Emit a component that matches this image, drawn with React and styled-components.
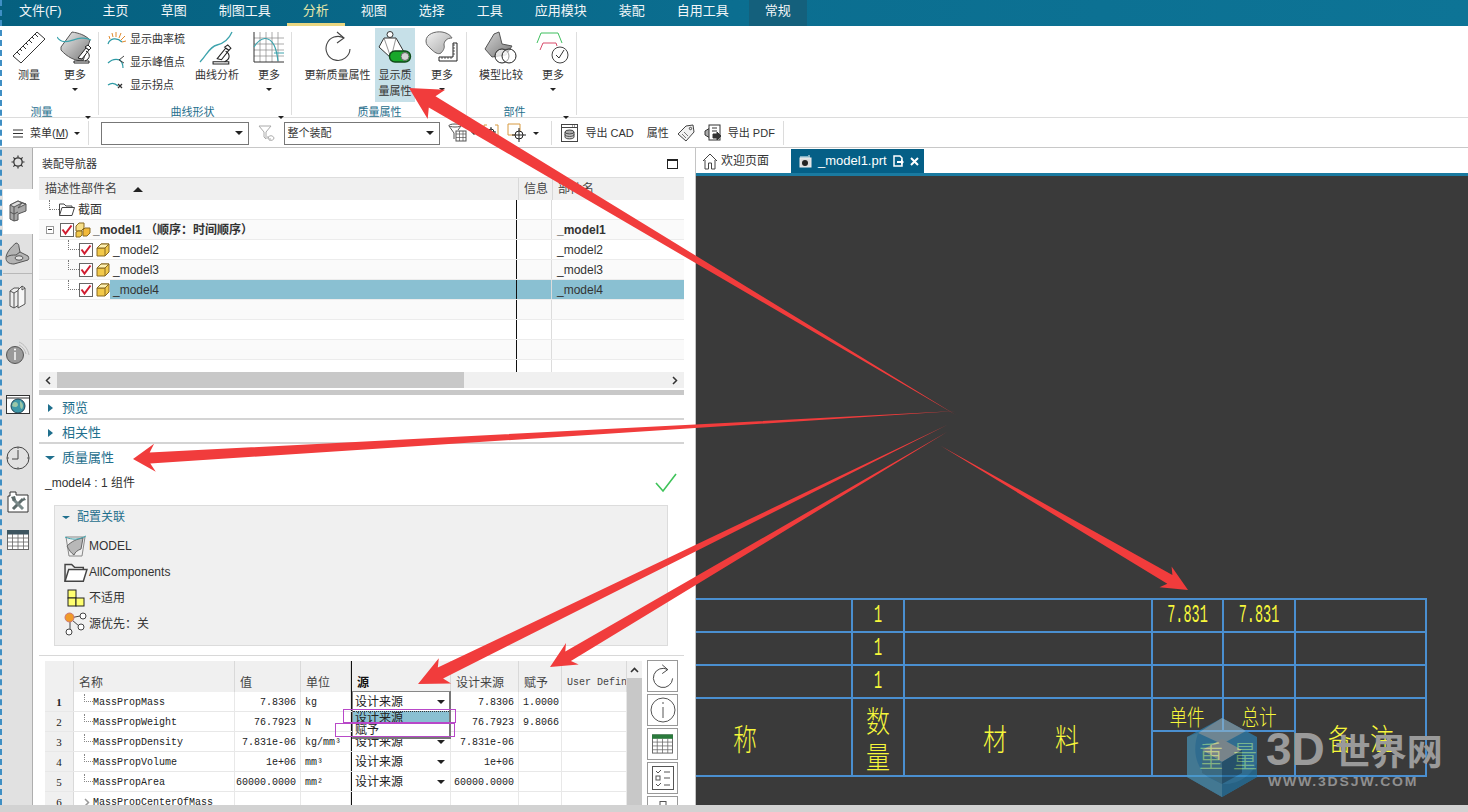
import React from "react";
import styled, { createGlobalStyle } from "styled-components";

const CJK = `"Liberation Sans", "Noto Sans CJK SC", sans-serif`;
const MONO = `"Liberation Mono", "Noto Sans CJK SC", monospace`;

const GlobalStyle = createGlobalStyle`
  html, body { margin: 0; padding: 0; background: #fff; }
  * { box-sizing: border-box; }
`;

const Page = styled.div`
  position: relative;
  width: 1468px;
  height: 812px;
  overflow: hidden;
  display: flex;
  flex-direction: column;
  font-family: ${CJK};
  font-size: 12px;
  line-height: 14px;
  color: #333;
  background: #fff;
  &::before {
    content: "";
    position: absolute;
    left: 0;
    top: 0;
    bottom: 7px;
    border-left: 2px dashed #3f8fc4;
    z-index: 5;
  }
`;

/* menu bar */
const MenuBar = styled.div`
  height: 26px;
  flex: none;
  display: flex;
  align-items: stretch;
  background: linear-gradient(90deg, #05607f 0%, #0b6e90 50%, #0d7496 100%);
  padding-left: 3px;
`;
const MenuTab = styled.div`
  display: flex;
  align-items: center;
  padding: 0 16px 2px;
  font-size: 13px;
  color: ${(p) => (p.$active ? "#e6e6a8" : "#f2f6f8")};
  margin-right: ${(p) => p.$mr || 0}px;
  margin-left: ${(p) => p.$ml || 0}px;
  background: ${(p) => (p.$context ? "#14607c" : "transparent")};
  border-bottom: 3px solid ${(p) => (p.$active ? "#e9d681" : "transparent")};
`;

/* ribbon */
const Ribbon = styled.div`
  height: 92px;
  flex: none;
  display: flex;
  background: #fff;
  border-bottom: 1px solid #dcdcdc;
`;
const Group = styled.div`
  width: ${(p) => p.$w}px;
  height: 91px;
  display: flex;
  flex-direction: column;
  position: relative;
  &::after {
    content: "";
    position: absolute;
    right: 0;
    top: 6px;
    bottom: 2px;
    width: 1px;
    background: #dedede;
  }
`;
const GroupBody = styled.div`
  height: 76px;
  padding-top: 2px;
  padding-left: ${(p) => p.$pl || 0}px;
  display: flex;
`;
const GroupFooter = styled.div`
  flex: 1;
  display: flex;
  align-items: center;
  justify-content: center;
  position: relative;
  font-size: 11px;
  color: #1f6f8d;
  padding-top: 3px;
  padding-right: ${(p) => p.$pr || 0}px;
  span.c {
    position: absolute;
    right: 8px;
    top: 6px;
  }
`;
const RibbonBtn = styled.div`
  width: ${(p) => p.$w}px;
  margin-left: ${(p) => p.$ml || 0}px;
  height: 74px;
  padding-top: 3px;
  display: flex;
  flex-direction: column;
  align-items: center;
  background: ${(p) => (p.$active ? "#c6e0e8" : "transparent")};
  svg { flex: none; }
`;
const BtnIcon = styled.div`
  height: 36px;
  display: flex;
  align-items: flex-start;
  justify-content: center;
`;
const BtnLabel = styled.div`
  font-size: 11px;
  line-height: 16px;
  text-align: center;
  white-space: nowrap;
  color: #333;
`;
const Caret = styled.span`
  display: inline-block;
  width: 0;
  height: 0;
  border-left: ${(p) => p.$s || 3}px solid transparent;
  border-right: ${(p) => p.$s || 3}px solid transparent;
  border-top: ${(p) => p.$s || 3}px solid #222;
`;
const SortUp = styled.i`
  display: inline-block;
  width: 0;
  height: 0;
  border-left: 5px solid transparent;
  border-right: 5px solid transparent;
  border-bottom: 5px solid #222;
`;
const BtnCaret = styled.div`
  height: 12px;
  display: flex;
  align-items: center;
`;
const SmallList = styled.div`
  width: ${(p) => p.$w}px;
  margin-left: 8px;
  margin-top: -1px;
  display: flex;
  flex-direction: column;
`;
const SmallItem = styled.div`
  height: 23px;
  display: flex;
  align-items: center;
  gap: 3px;
  font-size: 11px;
  white-space: nowrap;
`;

/* toolbar */
const Toolbar = styled.div`
  height: 30px;
  flex: none;
  display: flex;
  align-items: center;
  background: #fff;
  border-bottom: 1px solid #c8c8c8;
  padding: 1px 0 0 13px;
  font-size: 11px;
`;
const ToolText = styled.span`
  margin-left: ${(p) => p.$ml || 0}px;
  white-space: nowrap;
`;
const ToolIcon = styled.span`
  display: inline-flex;
  margin-left: ${(p) => p.$ml || 0}px;
`;
const ToolSep = styled.span`
  width: 1px;
  height: 24px;
  background: #dcdcdc;
  margin-left: ${(p) => p.$ml || 0}px;
`;
const SelectBox = styled.div`
  width: ${(p) => p.$w}px;
  height: 23px;
  margin-left: ${(p) => p.$ml}px;
  border: 1px solid #777;
  display: flex;
  align-items: center;
  justify-content: space-between;
  padding: 0 5px 0 3px;
  font-size: 11px;
  background: #fff;
`;

/* main area */
const Main = styled.div`
  flex: 1;
  min-height: 0;
  display: flex;
`;
const Rail = styled.div`
  width: 33px;
  flex: none;
  background: #e1e1e1;
  border-right: 1px solid #aeaeae;
  display: flex;
  flex-direction: column;
  padding-left: 3px;
`;
const RailTab = styled.div`
  height: ${(p) => p.$h}px;
  margin-top: ${(p) => p.$mt || 0}px;
  margin-bottom: ${(p) => p.$mb || 0}px;
  margin-right: ${(p) => (p.$active ? -1 : 0)}px;
  display: flex;
  align-items: center;
  justify-content: center;
  background: ${(p) => (p.$active ? "#fff" : "transparent")};
  border-bottom: 1px solid ${(p) => (p.$line ? "#b8b8b8" : "transparent")};
`;

const LeftPanel = styled.div`
  width: 663px;
  flex: none;
  display: flex;
  flex-direction: column;
  background: #fff;
  border-right: 1px solid #c4c4c4;
  overflow: hidden;
`;
const NavHeader = styled.div`
  height: 29px;
  flex: none;
  display: flex;
  align-items: center;
  justify-content: space-between;
  padding: 3px 17px 0 9px;
  font-size: 11px;
`;
const MaxIcon = styled.span`
  width: 11px;
  height: 10px;
  border: 1px solid #222;
  border-top-width: 2px;
`;
const TreeBox = styled.div`
  margin: 0 11px 0 6px;
  height: 211px;
  flex: none;
  border-top: 1px solid #ddd;
  display: flex;
  flex-direction: column;
`;
const TreeHead = styled.div`
  height: 22px;
  flex: none;
  display: grid;
  grid-template-columns: 479px 34px 1fr;
  background: #f0f0f0;
  font-size: 12px;
  color: #444;
  span { display: flex; align-items: center; padding-left: 6px; gap: 16px; white-space: nowrap; }
  span + span { border-left: 1px solid #d8d8d8; padding-left: 5px; }
`;
const TreeBody = styled.div`
  height: 172px;
  flex: none;
  overflow: hidden;
`;
const TreeRow = styled.div`
  height: 20px;
  display: grid;
  grid-template-columns: 478px 35px 1fr;
  background: ${(p) => (p.$alt ? "#fafafa" : "#fff")};
  border-bottom: 1px solid #ececec;
  font-size: 12px;
`;
const NameCell = styled.div`
  display: flex;
  align-items: center;
  padding-left: ${(p) => p.$pl || 0}px;
  border-right: 1px solid #111;
  white-space: nowrap;
  min-width: 0;
`;
const RowLabel = styled.div`
  flex: 1;
  height: 100%;
  display: flex;
  align-items: center;
  padding-left: ${(p) => (p.$bold ? 1 : 3)}px;
  font-weight: ${(p) => (p.$bold ? 700 : 400)};
  background: ${(p) => (p.$sel ? "#8ac0d2" : "transparent")};
`;
const ColCell = styled.div`
  display: flex;
  align-items: center;
  padding-left: 5px;
  border-right: ${(p) => (p.$info ? "1px solid #dcdcdc" : "0")};
  font-weight: ${(p) => (p.$bold ? 700 : 400)};
  background: ${(p) => (p.$sel ? "#8ac0d2" : "transparent")};
`;
const Connector = styled.span`
  flex: none;
  align-self: flex-start;
  width: ${(p) => p.$w}px;
  height: 10px;
  border-left: 1px dotted #777;
  border-bottom: 1px dotted #777;
`;
const ExpandBox = styled.span`
  flex: none;
  width: 8px;
  height: 8px;
  border: 1px solid #999;
  margin: 0 6px;
  position: relative;
  background: #fff;
  &::after {
    content: "";
    position: absolute;
    left: 1px;
    right: 1px;
    top: 2px;
    height: 1px;
    background: #333;
  }
`;
const IconGap = styled.span`
  width: ${(p) => p.$w}px;
  flex: none;
`;
const HScroll = styled.div`
  height: 16px;
  flex: none;
  display: flex;
  align-items: stretch;
  background: #f0f0f0;
  font-size: 11px;
`;
const ScrollArrow = styled.span`
  width: 18px;
  display: flex;
  align-items: center;
  justify-content: center;
  &:last-child { margin-left: auto; }
`;
const HThumb = styled.span`
  width: 407px;
  background: #c8c8c8;
`;
const Sash = styled.div`
  margin: ${(p) => p.$mt || 0}px 11px 0 6px;
  height: ${(p) => p.$h}px;
  flex: none;
  background: ${(p) => p.$c || "#d4d4d4"};
`;
const SectionHead = styled.div`
  height: ${(p) => p.$h}px;
  flex: none;
  display: flex;
  align-items: center;
  padding-left: ${(p) => p.$pl || 15}px;
  padding-top: ${(p) => p.$pt || 0}px;
  gap: ${(p) => p.$gap || 9}px;
  font-size: 13px;
  color: #1f6f8d;
`;
const TriRight = styled.span`
  width: 0;
  height: 0;
  border-top: 4px solid transparent;
  border-bottom: 4px solid transparent;
  border-left: 5px solid #1f6f8d;
`;
const TriDown = styled.span`
  width: 0;
  height: 0;
  border-left: ${(p) => p.$s || 5}px solid transparent;
  border-right: ${(p) => p.$s || 5}px solid transparent;
  border-top: ${(p) => (p.$s || 5) - 1}px solid #1f6f8d;
`;
const CompLine = styled.div`
  height: 24px;
  flex: none;
  display: flex;
  align-items: center;
  justify-content: space-between;
  padding: 1px 18px 0 12px;
  font-size: 12px;
  color: #333;
`;
const ConfigPanel = styled.div`
  margin: 11px 27px 0 21px;
  height: 141px;
  flex: none;
  background: #f0f0f0;
  border: 1px solid #dcdcdc;
  padding-left: 7px;
`;
const ConfigHead = styled.div`
  height: 22px;
  margin-bottom: 5px;
  display: flex;
  align-items: center;
  gap: 7px;
  font-size: 12px;
  color: #1f6f8d;
`;
const ConfigRow = styled.div`
  height: 26px;
  display: flex;
  align-items: center;
  font-size: 12px;
  color: #333;
  white-space: nowrap;
`;
const ConfigIcon = styled.span`
  width: 27px;
  flex: none;
  display: flex;
  justify-content: center;
`;
const GridArea = styled.div`
  margin: 9px 11px 0 6px;
  border-top: 1px solid #d8d8d8;
  padding: 5px 0 0 6px;
  flex: 1;
  min-height: 0;
  display: flex;
`;
const GridTable = styled.div`
  width: 582px;
  flex: none;
  display: flex;
  flex-direction: column;
`;
const cols = "29px 161px 66px 50px 100px 68px 43px 65px";
const GridHead = styled.div`
  height: 31px;
  flex: none;
  display: grid;
  grid-template-columns: ${cols};
  background: #f0f0f0;
`;
const HeadCell = styled.div`
  display: flex;
  align-items: flex-end;
  padding: 0 0 2px 5px;
  font-family: ${(p) => (p.$mono ? MONO : CJK)};
  font-size: ${(p) => (p.$mono ? "10px" : "12px")};
  font-weight: ${(p) => (p.$bold ? 700 : 400)};
  color: ${(p) => (p.$bold ? "#111" : "#444")};
  border-right: 1px solid #d9d9d9;
  border-left: ${(p) => (p.$line ? "1px solid #111" : "0")};
  white-space: nowrap;
  overflow: hidden;
`;
const GridRow = styled.div`
  height: 20px;
  flex: none;
  display: grid;
  grid-template-columns: ${cols};
  border-bottom: 1px solid #e8e8e8;
  background: #fff;
`;
const NumCell = styled.div`
  background: #f0f0f0;
  display: flex;
  align-items: center;
  justify-content: center;
  font-family: "Liberation Serif", serif;
  font-size: 11px;
  font-weight: ${(p) => (p.$bold ? 700 : 400)};
  color: #222;
  border-right: 1px solid #d9d9d9;
`;
const TextCell = styled.div`
  display: flex;
  align-items: center;
  justify-content: ${(p) => (p.$right ? "flex-end" : "flex-start")};
  padding: ${(p) => (p.$right ? "2px 4px 0 0" : "2px 0 0 4px")};
  font-family: ${MONO};
  font-size: 10px;
  color: #222;
  border-right: 1px solid #e8e8e8;
  white-space: nowrap;
`;
const NameGridCell = styled(TextCell)`
  padding-left: 10px;
`;
const GridConn = styled.span`
  width: 9px;
  height: 8px;
  flex: none;
  align-self: flex-start;
  border-left: 1px dotted #888;
  border-bottom: 1px dotted #888;
`;
const GridChevron = styled.span`
  width: 9px;
  flex: none;
  display: flex;
`;
const SourceCell = styled.div`
  position: relative;
  display: flex;
  align-items: center;
  justify-content: space-between;
  padding: 1px 5px 0 3px;
  font-size: 12px;
  color: #222;
  border-left: 1px solid #111;
  border-right: 1px solid #e8e8e8;
`;
const OpenSelect = styled.div`
  position: absolute;
  left: 0;
  top: -1px;
  width: 99px;
  background: #fff;
  border: 1px solid #888;
  border-right: 2px solid #777;
  border-bottom: 2px solid #777;
  z-index: 3;
  font-size: 12px;
`;
const OpenCurrent = styled.div`
  height: 19px;
  display: flex;
  align-items: center;
  justify-content: space-between;
  padding: 1px 4px 0 2px;
`;
const OpenOption = styled.div`
  height: ${(p) => p.$h}px;
  line-height: ${(p) => p.$h}px;
  padding-left: 2px;
  background: ${(p) => (p.$sel ? "#8ac0d2" : "#fff")};
  border-top: ${(p) => (p.$sel ? "1px dotted #333" : "0")};
  overflow: hidden;
`;
const Marker = styled.div`
  position: absolute;
  left: ${(p) => p.$l}px;
  top: ${(p) => p.$t}px;
  width: ${(p) => p.$w}px;
  height: 14px;
  border: 1px solid #b848c8;
  z-index: 4;
`;
const VScroll = styled.div`
  width: 15px;
  flex: none;
  display: flex;
  flex-direction: column;
  background: #f0f0f0;
`;
const VArrow = styled.div`
  height: 17px;
  flex: none;
  display: flex;
  align-items: center;
  justify-content: center;
`;
const VThumb = styled.div`
  flex: 1;
  background: #c8c8c8;
`;
const SideButtons = styled.div`
  margin-left: 5px;
  margin-top: -1px;
  display: flex;
  flex-direction: column;
  gap: 2px;
`;
const SideButton = styled.div`
  width: 31px;
  height: 32px;
  flex: none;
  border: 1px solid #999;
  display: flex;
  align-items: center;
  justify-content: center;
  background: #fff;
`;

/* canvas side */
const RightPane = styled.div`
  flex: 1;
  display: flex;
  flex-direction: column;
  min-width: 0;
  background: #fff;
`;
const TabBar = styled.div`
  height: 28px;
  flex: none;
  display: flex;
  padding-top: 1px;
  border-bottom: 3px solid #1a7aa0;
`;
const DocTab = styled.div`
  width: ${(p) => p.$w}px;
  display: flex;
  align-items: center;
  gap: ${(p) => p.$gap || 4}px;
  padding-left: ${(p) => p.$pl}px;
  font-size: ${(p) => p.$fs || 12}px;
  white-space: nowrap;
  background: ${(p) => (p.$active ? "#055f86" : "transparent")};
  color: ${(p) => (p.$active ? "#fff" : "#333")};
`;
const Canvas = styled.div`
  flex: 1;
  min-height: 0;
  background: #3a3a3a;
  display: flex;
  flex-direction: column;
  padding-bottom: 28px;
`;
const CadTable = styled.div`
  margin-top: auto;
  width: 731px;
  display: grid;
  grid-template-columns: 157px 52px 248px 71px 72px 131px;
  grid-template-rows: 33px 33px 33px 33px 45px;
  border-top: 2px solid #4a8fd0;
`;
const CadCell = styled.div`
  grid-column: ${(p) => p.$col || "auto"};
  grid-row: ${(p) => p.$row || "auto"};
  border-right: 2px solid #4a8fd0;
  border-bottom: 2px solid #4a8fd0;
  display: flex;
  flex-direction: ${(p) => (p.$stack ? "column" : "row")};
  align-items: center;
  justify-content: center;
  gap: ${(p) => p.$gap || 0}px;
  padding: ${(p) => p.$pad || 0};
  color: #f7f73a;
  font-family: "Noto Sans CJK SC", sans-serif;
  font-weight: 300;
  line-height: 1;
  min-width: 0;
`;
const CadNum = styled.span`
  display: inline-block;
  font-family: "Liberation Mono", monospace;
  font-size: 13.5px;
  line-height: 1;
  transform: scaleY(1.9);
  color: #f7f73a;
`;
const CadBig = styled.span`
  display: inline-block;
  font-size: ${(p) => p.$fs || 30}px;
  transform: scaleX(0.8);
`;

/* overlays */
const ArrowLayer = styled.svg`
  position: absolute;
  left: 0;
  top: 0;
  pointer-events: none;
  z-index: 6;
`;
const Watermark = styled.div`
  position: absolute;
  left: 1186px;
  top: 717px;
  display: flex;
  gap: 8px;
  z-index: 7;
  pointer-events: none;
`;
const WmText = styled.div`
  display: flex;
  flex-direction: column;
  padding-top: 9px;
`;
const WmTitle = styled.div`
  display: flex;
  align-items: center;
  height: 46px;
  gap: 10px;
  color: #9a9a9a;
  font-weight: 700;
  white-space: nowrap;
`;
const WmLatin = styled.span`
  font-family: "Liberation Sans", sans-serif;
  font-size: 46px;
  line-height: 46px;
`;
const WmCjk = styled.span`
  font-family: "Noto Sans CJK SC", sans-serif;
  font-size: 36px;
  line-height: 46px;
`;
const WmUrl = styled.div`
  margin-top: 3px;
  margin-left: 2px;
  font-family: "Liberation Sans", sans-serif;
  font-size: 13px;
  line-height: 13px;
  font-weight: 700;
  transform-origin: left center;
  transform: scaleX(1.08);
  letter-spacing: 1.65px;
  color: #8f8f8f;
  white-space: nowrap;
`;
const BottomStrip = styled.div`
  height: 7px;
  flex: none;
  background: #d2d2d2;
`;

/* ---- icons ---- */
const Ruler = () => (
  <svg width="34" height="34" viewBox="0 0 34 34" fill="none" stroke="#333">
    <path d="M1 25 L25 1 L33 8 L9 32 Z" fill="#fff" />
    <path d="M5 21l3 3M8 18l2 2M11 15l3 3M14 12l2 2M17 9l3 3M20 6l2 2M23 3l3 3" />
  </svg>
);
const Microscope = ({ x = 0, y = 0, s = 1 }) => (
  <g transform={`translate(${x} ${y}) scale(${s})`} stroke="#222" fill="#fff" strokeWidth="1">
    <path d="M1 16 H16 V18 H1 Z" />
    <path d="M5 13 L13 3 L16 5 L9 14 Z" />
    <path d="M13 6 C18 9 17 14 12 16" fill="none" />
    <path d="M12 2 L15 0 L18 3 L16 5 Z" />
  </g>
);
const SheetScope = () => (
  <svg width="36" height="34" viewBox="0 0 36 34" fill="none">
    <defs>
      <linearGradient id="gs1" x1="0" y1="0" x2="1" y2="1">
        <stop offset="0" stopColor="#efefef" />
        <stop offset="1" stopColor="#777" />
      </linearGradient>
    </defs>
    <path d="M4 16 L15 1 C22 2 28 4 33 9 L26 30 C18 30 10 26 4 19 Z" fill="url(#gs1)" stroke="#555" />
    <path d="M0 6 C8 18 20 2 34 9" stroke="#3da3ad" strokeWidth="1.2" />
    <Microscope x="16" y="14" s="1" />
  </svg>
);
const CombIcon = () => (
  <svg width="20" height="16" viewBox="0 0 20 16" fill="none">
    <path d="M1 13 C3 7 10 6 15 11" stroke="#2d9aa5" strokeWidth="1.2" />
    <path d="M3 8L2 5M6 6L5 2M9 6L9 1M12 7L14 2M14 9L18 5M15 11L19 10" stroke="#e08a2e" />
  </svg>
);
const PeakIcon = () => (
  <svg width="20" height="16" viewBox="0 0 20 16" fill="none">
    <path d="M1 9 C5 5 10 5 13 6 C15 8 16 11 16 14" stroke="#2d9aa5" strokeWidth="1.2" />
    <path d="M12 6 L17 2 M12 6 L17 9" stroke="#444" />
  </svg>
);
const InflectIcon = () => (
  <svg width="20" height="16" viewBox="0 0 20 16" fill="none">
    <path d="M1 8 C5 5 8 6 11 9" stroke="#2d9aa5" strokeWidth="1.2" />
    <path d="M11 7 L15 11 M15 7 L11 11" stroke="#333" strokeWidth="1.3" />
  </svg>
);
const CurveScope = () => (
  <svg width="36" height="34" viewBox="0 0 36 34" fill="none">
    <path d="M1 31 C8 24 10 16 18 14 C26 12 30 8 33 1" stroke="#3da3ad" strokeWidth="1.3" />
    <Microscope x="13" y="14" s="1.05" />
  </svg>
);
const ChartIcon = () => (
  <svg width="32" height="32" viewBox="0 0 32 32" fill="none">
    <path d="M1 7H31M1 13H31M1 19H31M1 25H31M7 1V31M13 1V31M19 1V31M25 1V31" stroke="#888" strokeWidth=".7" />
    <path d="M1 1V31H31" stroke="#333" />
    <path d="M1 16 C8 5 16 5 21 14 C23 18 24 22 25 30" stroke="#3da3ad" strokeWidth="1.2" />
    <path d="M21 22H31" stroke="#3da3ad" />
  </svg>
);
const RefreshIcon = ({ size = 30, sw = 1.1 }) => (
  <svg width={size} height={size} viewBox="0 0 30 30" fill="none" stroke="#444" strokeWidth={sw}>
    <path d="M21 7 A12 12 0 1 0 27 18" />
    <path d="M14 1 L21 7 L14 12" />
  </svg>
);
const MassToggle = () => (
  <svg width="36" height="36" viewBox="0 0 36 36" fill="none">
    <path d="M7 7 H19 L27 21 L14 27 L2 16 Z" fill="#fff" stroke="#333" />
    <path d="M7 7 L14 27 M19 7 L14 27" stroke="#666" strokeWidth=".7" />
    <circle cx="13" cy="3.500" r="3" fill="#fff" stroke="#333" />
    <rect x="12.500" y="20" width="21" height="11" rx="5.500" fill="#18a82a" stroke="#0f4a18" strokeWidth="1.400" />
    <circle cx="28" cy="25.500" r="4" fill="#d4d4d4" stroke="#666" />
  </svg>
);
const ShapeSquare = () => (
  <svg width="34" height="34" viewBox="0 0 34 34" fill="none">
    <defs>
      <linearGradient id="gs2" x1="0" y1="0" x2="1" y2="1">
        <stop offset="0" stopColor="#f2f2f2" />
        <stop offset="1" stopColor="#a8a8a8" />
      </linearGradient>
    </defs>
    <path d="M1 10 C1 3 10 0 17 1 C23 2 26 5 27 7 C22 7 19 10 19 14 C20 17 18 20 16 22 C13 24 9 21 6 18 C3 15 1 14 1 10 Z" fill="url(#gs2)" stroke="#666" />
    <path d="M32 12 V30 H14 V26 H28 V12 Z" fill="#fff" stroke="#222" />
    <path d="M17 26v2M20 26v2M23 26v2M26 26v2M28 23h2M28 20h2M28 17h2M28 14h2" stroke="#222" strokeWidth=".7" />
  </svg>
);
const CompareIcon = () => (
  <svg width="34" height="34" viewBox="0 0 34 34" fill="none">
    <defs>
      <linearGradient id="gs3" x1="0" y1="0" x2="1" y2="1">
        <stop offset="0" stopColor="#d4d4d4" />
        <stop offset="1" stopColor="#777" />
      </linearGradient>
    </defs>
    <path d="M1 18 L10 3 L15 1 L18 13 L28 15 L22 24 L8 26 Z" fill="url(#gs3)" stroke="#555" />
    <circle cx="18" cy="25" r="7" fill="#ffffffbb" stroke="#222" />
    <circle cx="25" cy="25" r="7" fill="#ffffff88" stroke="#222" />
  </svg>
);
const ProfileCheck = () => (
  <svg width="34" height="34" viewBox="0 0 34 34" fill="none">
    <path d="M1 12 L5 2 H22 L26 12" stroke="#3fbf5f" />
    <path d="M4 19 L7 12 H20 L21 15" stroke="#d84a6a" />
    <circle cx="24" cy="24" r="8" fill="#fff" stroke="#444" />
    <path d="M20 24 L23 27 L28 19" stroke="#333" />
  </svg>
);
const FilterUndo = () => (
  <svg width="17" height="18" viewBox="0 0 17 18" fill="none" stroke="#aaa">
    <path d="M1 2 H13 L8 8 V15 L6 13 V8 Z" />
    <path d="M10 14 C11 11 15 11 16 14 C16 16 13 17 11 16 M10 12 V15 H13" />
  </svg>
);
const FilterGrid = () => (
  <svg width="20" height="20" viewBox="0 0 20 20" fill="none" stroke="#555">
    <ellipse cx="7" cy="2.500" rx="6" ry="1.500" />
    <path d="M1 3 L6 10 V16 M13 3 L10 7" />
    <rect x="8" y="8" width="10" height="10" fill="#fff" />
    <path d="M8 11H18M8 14.500H18M11.500 8V18M15 8V18" strokeWidth=".7" />
  </svg>
);
const OrangeTarget = ({ cross }) => (
  <svg width="20" height="20" viewBox="0 0 20 20" fill="none">
    {cross ? (
      <>
        <path d="M1 1H13V12H1Z" fill="#fff" stroke="#d89a40" />
        <circle cx="12" cy="12" r="4" fill="#fff" stroke="#222" />
        <path d="M12 5V19M5 12H19" stroke="#222" />
      </>
    ) : (
      <>
        <path d="M4 2H1V15H4M12 2H15V15H12" stroke="#d89a40" />
        <circle cx="8" cy="9" r="3" stroke="#222" />
        <path d="M8 4V14M3 9H13" stroke="#222" />
      </>
    )}
  </svg>
);
const DbIcon = () => (
  <svg width="17" height="18" viewBox="0 0 17 18" fill="none" stroke="#444">
    <rect x=".5" y=".5" width="16" height="17" fill="#fff" />
    <path d="M.5 3.500H16.500M11 2h1M13 2h1" />
    <path d="M4 8V13C4 15.500 13 15.500 13 13V8" fill="#ccc" />
    <ellipse cx="8.500" cy="8" rx="4.500" ry="2" fill="#aaa" />
    <path d="M4 10.500C4 13 13 13 13 10.500" />
  </svg>
);
const TagIcon = () => (
  <svg width="18" height="18" viewBox="0 0 18 18" fill="none" stroke="#444">
    <path d="M1 10 L9 2 L16 1 L17 8 L9 17 Z" fill="#f2f2f2" />
    <circle cx="13.500" cy="4.500" r="1.200" />
    <path d="M5 10l4 4M7 8l4 4" strokeWidth=".7" />
  </svg>
);
const PdfIcon = () => (
  <svg width="18" height="18" viewBox="0 0 18 18" fill="none" stroke="#333">
    <path d="M1 7 L6 4 L6 14 L1 11 Z" fill="#aaa" />
    <rect x="5" y="1" width="11" height="15" fill="#fff" />
    <path d="M8 4H13M8 7H13" />
    <path d="M9 10 H13 V8 L17 12 L13 16 V14 H9 Z" fill="#333" />
  </svg>
);
const Gear = () => (
  <svg width="14" height="14" viewBox="0 0 14 14" fill="none" stroke="#333">
    <circle cx="7" cy="7" r="4.200" strokeWidth="1.300" />
    <path d="M7 0.500V2.500M7 11.500V13.500M0.500 7H2.500M11.500 7H13.500M2.400 2.400L3.800 3.800M10.200 10.200L11.600 11.600M2.400 11.600L3.800 10.200M10.200 3.800L11.600 2.400" strokeWidth="1.200" />
  </svg>
);
const ModelIcon = () => (
  <svg width="18" height="22" viewBox="0 0 18 22" fill="none" stroke="#555">
    <path d="M1 5 L9 1 L17 4 V11 L9 14 V20 L5 21 L1 19 Z" fill="#a8a8a8" />
    <path d="M1 5 L5 7 L13 3 L9 1 Z M9 8 L13 3 L17 4 L9 8" fill="#dedede" />
    <path d="M5 7 V21 M1 12 L5 14 L9 12" />
  </svg>
);
const SheetMetal = () => (
  <svg width="25" height="23" viewBox="0 0 25 23" fill="none" stroke="#555">
    <path d="M1 16 C1 11 6 5 11 1 C13 1 14 3 14 5 L15 10 L23 14 C24 16 24 17 23 18 L9 22 C4 22 1 20 1 16 Z" fill="#b4b4b4" />
    <path d="M2 15 C4 13 8 13 11 13 L15 10" />
    <ellipse cx="14" cy="16" rx="4" ry="2.200" fill="#e2e2e2" />
  </svg>
);
const Books = () => (
  <svg width="17" height="24" viewBox="0 0 17 24" fill="none" stroke="#555">
    <path d="M1 6 L5 3 H10 V20 L5 23 L1 21 Z" fill="#eee" />
    <path d="M1 6 L5 8 V23" />
    <path d="M5 8 L10 5" />
    <path d="M9 5 L13 1 L16 3 V19 L9 23 Z" fill="#f6f6f6" />
    <path d="M13 1 V5 L16 3" />
  </svg>
);
const InfoRound = () => (
  <svg width="24" height="26" viewBox="0 0 24 26" fill="none">
    <circle cx="9" cy="16" r="8.500" fill="#9a9a9a" stroke="#555" />
    <path d="M9 13V21" stroke="#fff" strokeWidth="1.400" />
    <circle cx="9" cy="10.500" r="1" fill="#fff" />
    <path d="M13 3 C18 5 22 10 23 16 M13 6 C17 8 19 11 20 15" stroke="#bbb" />
  </svg>
);
const GlobeIcon = () => (
  <svg width="24" height="19" viewBox="0 0 24 19" fill="none">
    <rect x=".5" y=".5" width="23" height="18" fill="#fff" stroke="#333" />
    <path d="M.5 3H23.500" stroke="#333" />
    <circle cx="12" cy="11" r="7" fill="#3d97a8" stroke="#245" />
    <path d="M7 8 C9 6 12 7 12 10 C11 13 8 12 6 11 M14 6 C17 8 18 11 16 14 C14 14 14 10 14 6" fill="#9cc7a8" />
  </svg>
);
const ClockIcon = () => (
  <svg width="24" height="24" viewBox="0 0 24 24" fill="none" stroke="#444">
    <circle cx="12" cy="12" r="11" />
    <path d="M12 4V13H6" />
    <path d="M12 1V3M12 21V23M1 12H3M21 12H23" strokeWidth=".8" />
  </svg>
);
const ToolsIcon = () => (
  <svg width="22" height="22" viewBox="0 0 22 22" fill="none" stroke="#333">
    <path d="M1 5H3V1H9V4H21V21H1Z" fill="#fff" />
    <path d="M6 18 L16 8" stroke="#5d6b6b" strokeWidth="3" />
    <path d="M6 8 L16 18" stroke="#7a8a8a" strokeWidth="3" />
    <path d="M4 6 L8 5 L9 9 L6 10 Z M17 6 L19 9 L15 10 Z" fill="#5d6b6b" stroke="none" />
  </svg>
);
const TableIcon = ({ head = "#3d5560", w = 22, h = 20 }) => (
  <svg width={w} height={h} viewBox="0 0 22 20" fill="none" stroke="#666">
    <rect x=".5" y=".5" width="21" height="19" fill="#fff" />
    <rect x=".5" y=".5" width="21" height="3.500" fill={head} stroke={head} />
    <path d="M.5 8H21.500M.5 12H21.500M.5 16H21.500M5.500 4V19.500M11 4V19.500M16.500 4V19.500" strokeWidth=".8" />
  </svg>
);
const OpenFolder = ({ w = 16, h = 13, stroke = "#444" }) => (
  <svg width={w} height={h} viewBox="0 0 16 13" fill="none" stroke={stroke}>
    <path d="M.5 12.500V1H5L7 3H13V4.500" />
    <path d="M.5 12.500L3 4.500H15.500L13 12.500Z" fill="#fff" />
  </svg>
);
const CheckBox = () => (
  <svg width="14" height="14" viewBox="0 0 14 14" fill="none">
    <rect x=".5" y=".5" width="13" height="13" fill="#fff" stroke="#666" />
    <path d="M2.500 6.500L5.500 10.500L11.500 2.500" stroke="#d01c30" strokeWidth="2" />
  </svg>
);
const Cube = ({ w = 14 }) => (
  <svg width={w} height={w} viewBox="0 0 14 14" fill="none" stroke="#8a6a20">
    <path d="M1 5 L5 1 H13 V9 L9 13 H1Z" fill="#f2c94a" />
    <path d="M1 5 H9 V13 M9 5 L13 1" />
    <path d="M1 5 L5 1 H13 L9 5Z" fill="#fdf0b0" />
  </svg>
);
const Assembly = () => (
  <svg width="17" height="16" viewBox="0 0 17 16" fill="none" stroke="#8a6a20">
    <path d="M1 4 L4 1 H9 V6 L6 9 H1Z" fill="#f7e08a" />
    <path d="M8 8 L10 6 H15 V11 L12 14 H8Z" fill="#f2b93a" />
    <path d="M1 10 L3 9 H7 V13 L5 15 H1Z" fill="#f2c94a" />
  </svg>
);
const HomeIcon = () => (
  <svg width="16" height="17" viewBox="0 0 16 17" fill="none" stroke="#444">
    <path d="M1 8 L8 1 L15 8 M3 7 V16 H6.500 V10 H9.500 V16 H13 V7" />
  </svg>
);
const CamIcon = () => (
  <svg width="13" height="13" viewBox="0 0 13 13" fill="none">
    <rect x="1" y="3" width="11" height="9" fill="#ddd" stroke="#eee" />
    <circle cx="6" cy="8" r="3" fill="#222" />
    <path d="M1 2H9M10 0V3" stroke="#fff" />
  </svg>
);
const DocArrow = () => (
  <svg width="11" height="12" viewBox="0 0 11 12" fill="none">
    <path d="M1 1H7L9 3V11H1Z" stroke="#fff" strokeWidth="1.500" />
    <path d="M4 6H8V4L11 7L8 10V8H4Z" fill="#fff" />
  </svg>
);
const CloseX = () => (
  <svg width="9" height="9" viewBox="0 0 9 9" stroke="#fff" strokeWidth="2">
    <path d="M1 1L8 8M8 1L1 8" />
  </svg>
);
const GreenCheck = () => (
  <svg width="22" height="20" viewBox="0 0 22 20" fill="none" stroke="#3fc35a" strokeWidth="1.600">
    <path d="M1 10 L8 18 L21 1" />
  </svg>
);
const ModelFace = () => (
  <svg width="23" height="23" viewBox="0 0 23 23" fill="none">
    <path d="M2 2H21L18 21H5Z" stroke="#888" />
    <path d="M3 11 C8 6 13 4 19 3 L17 14 C14 15 11 17 10 20 C7 18 5 15 3 11Z" fill="#b8b8b8" stroke="#666" />
    <path d="M1 2C8 5 15 5 22 1" stroke="#3da3ad" />
  </svg>
);
const YellowBlocks = () => (
  <svg width="18" height="18" viewBox="0 0 18 18" stroke="#222" fill="#ffff70">
    <rect x="1" y="1" width="8" height="8" />
    <rect x="1" y="9" width="8" height="8" />
    <rect x="9" y="9" width="8" height="8" />
  </svg>
);
const SourceNodes = () => (
  <svg width="24" height="24" viewBox="0 0 24 24" fill="none" stroke="#444">
    <path d="M6 6L16 4M6 7V17M8 8L15 14" />
    <circle cx="5.500" cy="5.500" r="4.500" fill="#f09a28" stroke="#c77" />
    <circle cx="19" cy="4" r="3" fill="#fff" />
    <circle cx="5" cy="20" r="3" fill="#fff" />
    <circle cx="17" cy="15" r="3" fill="#fff" />
  </svg>
);
const InfoLine = () => (
  <svg width="26" height="26" viewBox="0 0 26 26" fill="none" stroke="#555">
    <circle cx="13" cy="13" r="12" />
    <path d="M13 10V21M12 6h2" />
  </svg>
);
const ChecklistIcon = () => (
  <svg width="22" height="24" viewBox="0 0 22 24" fill="none" stroke="#555">
    <rect x=".5" y=".5" width="21" height="23" />
    <path d="M4 5l2 2 3-3M4 18l2 2 3-3M12 6H18M12 12H18M12 19H18" />
    <rect x="4" y="10" width="4" height="4" />
  </svg>
);
const StubIcon = () => (
  <svg width="12" height="22" viewBox="0 0 12 22" fill="none" stroke="#555">
    <rect x="3" y="0.500" width="6" height="8" />
    <path d="M1 8H11V20H1Z" />
  </svg>
);
const HexLogo = () => (
  <svg width="72" height="81" viewBox="0 0 72 81">
    <g opacity=".62">
      <path d="M36 1 L71 20 V60 L36 80 L1 60 V20 Z" fill="#2a8cc4" />
      <path d="M36 1 L60 14 L36 27 L12 16 Z" fill="#8fb4c8" />
      <path d="M1 20 L12 16 C6 34 10 50 22 60 L36 67 L36 80 L1 60 Z" fill="#4a9ec8" />
      <path d="M36 22 L56 33 L36 45 L16 33 Z" fill="#9fb2bc" />
      <path d="M16 33 L36 45 V67 L16 56 Z" fill="#3d88ad" />
      <path d="M56 33 L36 45 V67 L56 56 Z" fill="#1a5f88" />
      <path d="M36 80 L71 60 V46 C66 58 52 68 36 67 Z" fill="#1c7cb2" />
    </g>
  </svg>
);
const ChevronUp = () => (
  <svg width="9" height="6" viewBox="0 0 9 6" fill="none" stroke="#333" strokeWidth="1.600">
    <path d="M1 5L4.500 1.500L8 5" />
  </svg>
);
const ChevronSide = ({ left, color = "#333" }) => (
  <svg width="6" height="9" viewBox="0 0 6 9" fill="none" stroke={color} strokeWidth="1.500">
    <path d={left ? "M5 1L1.500 4.500L5 8" : "M1 1L4.500 4.500L1 8"} />
  </svg>
);

/* tapered red arrows drawn from the point they fan out of to their head */
const arrowPoints = ([x0, y0], [x1, y1], neck, head, len) => {
  const d = Math.hypot(x1 - x0, y1 - y0);
  const ux = (x1 - x0) / d;
  const uy = (y1 - y0) / d;
  const nx = -uy;
  const ny = ux;
  const at = (back, side) => `${(x1 - ux * back + nx * side).toFixed(1)},${(y1 - uy * back + ny * side).toFixed(1)}`;
  return [
    `${x0},${y0}`,
    at(len - 5, neck / 2),
    at(len, head / 2),
    at(0, 0),
    at(len, -head / 2),
    at(len - 5, -neck / 2),
  ].join(" ");
};

const arrows = [
  { from: [956, 415], to: [409, 88], neck: 13, head: 34, len: 32 },
  { from: [956, 411], to: [133, 459], neck: 11, head: 28, len: 22 },
  { from: [947, 425], to: [418, 684], neck: 12, head: 28, len: 30 },
  { from: [947, 432], to: [550, 667], neck: 11, head: 25, len: 26 },
  { from: [941, 446], to: [1188, 590], neck: 10, head: 24, len: 26 },
];

const treeRows = [
  { name: "截面", type: "folder" },
  { name: "_model1 （顺序：时间顺序）", part: "_model1", type: "root" },
  { name: "_model2", part: "_model2", type: "child" },
  { name: "_model3", part: "_model3", type: "child" },
  { name: "_model4", part: "_model4", type: "child", sel: true },
  {}, {}, {}, {},
];

const gridRows = [
  { n: 1, name: "MassPropMass", v: "7.8306", u: "kg", src: "设计来源", r: "7.8306", a: "1.0000" },
  { n: 2, name: "MassPropWeight", v: "76.7923", u: "N", src: "设计来源", r: "76.7923", a: "9.8066" },
  { n: 3, name: "MassPropDensity", v: "7.831e-06", u: "kg/mm³", src: "设计来源", r: "7.831e-06" },
  { n: 4, name: "MassPropVolume", v: "1e+06", u: "mm³", src: "设计来源", r: "1e+06" },
  { n: 5, name: "MassPropArea", v: "60000.0000", u: "mm²", src: "设计来源", r: "60000.0000" },
  { n: 6, name: "MassPropCenterOfMass", v: "", u: "", folded: true },
];

const menuTabs = ["主页", "草图", "制图工具", "分析", "视图", "选择", "工具", "应用模块", "装配", "自用工具"];

const More = ({ w, ml, icon }) => (
  <RibbonBtn $w={w} $ml={ml}>
    <BtnIcon>{icon}</BtnIcon>
    <BtnLabel>更多</BtnLabel>
    <BtnCaret><Caret /></BtnCaret>
  </RibbonBtn>
);

const App = () => (
  <Page>
    <GlobalStyle />
    <MenuBar>
      <MenuTab $mr={9}>文件(F)</MenuTab>
      {menuTabs.map((t) => (
        <MenuTab key={t} $active={t === "分析"}>{t}</MenuTab>
      ))}
      <MenuTab $context $ml={4}>常规</MenuTab>
    </MenuBar>

    <Ribbon>
      <Group $w={99}>
        <GroupBody $pl={6}>
          <RibbonBtn $w={46}>
            <BtnIcon><Ruler /></BtnIcon>
            <BtnLabel>测量</BtnLabel>
          </RibbonBtn>
          <More w={46} icon={<SheetScope />} />
        </GroupBody>
        <GroupFooter $pr={16}>测量<span className="c"><Caret /></span></GroupFooter>
      </Group>
      <Group $w={193}>
        <GroupBody>
          <SmallList $w={85}>
            <SmallItem><CombIcon />显示曲率梳</SmallItem>
            <SmallItem><PeakIcon />显示峰值点</SmallItem>
            <SmallItem><InflectIcon />显示拐点</SmallItem>
          </SmallList>
          <RibbonBtn $w={50}>
            <BtnIcon><CurveScope /></BtnIcon>
            <BtnLabel>曲线分析</BtnLabel>
          </RibbonBtn>
          <More w={46} ml={4} icon={<ChartIcon />} />
        </GroupBody>
        <GroupFooter $pr={6}>曲线形状<span className="c"><Caret /></span></GroupFooter>
      </Group>
      <Group $w={175}>
        <GroupBody $pl={12}>
          <RibbonBtn $w={67}>
            <BtnIcon><RefreshIcon size={30} /></BtnIcon>
            <BtnLabel>更新质量属性</BtnLabel>
          </RibbonBtn>
          <RibbonBtn $w={40} $ml={4} $active>
            <BtnIcon><MassToggle /></BtnIcon>
            <BtnLabel>显示质<br />量属性</BtnLabel>
          </RibbonBtn>
          <More w={46} ml={4} icon={<ShapeSquare />} />
        </GroupBody>
        <GroupFooter>质量属性<span className="c"><Caret /></span></GroupFooter>
      </Group>
      <Group $w={110}>
        <GroupBody $pl={8}>
          <RibbonBtn $w={52}>
            <BtnIcon><CompareIcon /></BtnIcon>
            <BtnLabel>模型比较</BtnLabel>
          </RibbonBtn>
          <More w={48} ml={2} icon={<ProfileCheck />} />
        </GroupBody>
        <GroupFooter $pr={15}>部件<span className="c"><Caret /></span></GroupFooter>
      </Group>
    </Ribbon>

    <Toolbar>
      <svg width="10" height="9" viewBox="0 0 10 9" stroke="#333"><path d="M0 1H10M0 4.500H10M0 8H10" /></svg>
      <ToolText $ml={7}>菜单(<u>M</u>)</ToolText>
      <ToolIcon $ml={5}><Caret /></ToolIcon>
      <ToolSep $ml={8} />
      <SelectBox $w={148} $ml={12}><span /><Caret $s={4} /></SelectBox>
      <ToolIcon $ml={9}><FilterUndo /></ToolIcon>
      <SelectBox $w={156} $ml={9}><span>整个装配</span><Caret $s={4} /></SelectBox>
      <ToolIcon $ml={8}><FilterGrid /></ToolIcon>
      <ToolIcon $ml={3}><Caret /></ToolIcon>
      <ToolIcon $ml={6}><OrangeTarget /></ToolIcon>
      <ToolIcon $ml={4}><OrangeTarget cross /></ToolIcon>
      <ToolIcon $ml={6}><Caret /></ToolIcon>
      <ToolSep $ml={12} />
      <ToolIcon $ml={9}><DbIcon /></ToolIcon>
      <ToolText $ml={8}>导出 CAD</ToolText>
      <ToolText $ml={13}>属性</ToolText>
      <ToolIcon $ml={8}><TagIcon /></ToolIcon>
      <ToolIcon $ml={9}><PdfIcon /></ToolIcon>
      <ToolText $ml={6}>导出 PDF</ToolText>
      <ToolSep $ml={8} />
    </Toolbar>

    <Main>
      <Rail>
        <RailTab $h={28} $mb={13}><Gear /></RailTab>
        <RailTab $h={45} $active><ModelIcon /></RailTab>
        <RailTab $h={40} $line><SheetMetal /></RailTab>
        <RailTab $h={46}><Books /></RailTab>
        <RailTab $h={40} $mt={12}><InfoRound /></RailTab>
        <RailTab $h={36} $mt={15}><GlobeIcon /></RailTab>
        <RailTab $h={36} $mt={17}><ClockIcon /></RailTab>
        <RailTab $h={36} $mt={8}><ToolsIcon /></RailTab>
        <RailTab $h={36} $mt={2}><TableIcon /></RailTab>
      </Rail>

      <LeftPanel>
        <NavHeader>
          <span>装配导航器</span>
          <MaxIcon />
        </NavHeader>
        <TreeBox>
          <TreeHead>
            <span>描述性部件名<SortUp /></span>
            <span>信息</span>
            <span>部件名</span>
          </TreeHead>
          <TreeBody>
            {treeRows.map((r, i) => (
              <TreeRow key={i} $alt={i % 2 === 1}>
                {r.type === "folder" && (
                  <NameCell $pl={10}>
                    <Connector $w={10} />
                    <OpenFolder />
                    <RowLabel>{r.name}</RowLabel>
                  </NameCell>
                )}
                {r.type === "root" && (
                  <NameCell $pl={1}>
                    <ExpandBox />
                    <CheckBox />
                    <IconGap $w={1} />
                    <Assembly />
                    <RowLabel $bold>{r.name}</RowLabel>
                  </NameCell>
                )}
                {r.type === "child" && (
                  <NameCell $pl={29}>
                    <Connector $w={11} />
                    <CheckBox />
                    <IconGap $w={3} />
                    <Cube />
                    <RowLabel $sel={r.sel}>{r.name}</RowLabel>
                  </NameCell>
                )}
                {!r.type && <NameCell />}
                <ColCell $info $sel={r.sel} />
                <ColCell $sel={r.sel} $bold={r.type === "root"}>{r.part}</ColCell>
              </TreeRow>
            ))}
          </TreeBody>
          <HScroll>
            <ScrollArrow><ChevronSide left /></ScrollArrow>
            <HThumb />
            <ScrollArrow><ChevronSide /></ScrollArrow>
          </HScroll>
        </TreeBox>
        <Sash $mt={2} $h={5} $c="#c8c8c8" />
        <SectionHead $h={23} $pt={3}><TriRight />预览</SectionHead>
        <Sash $h={2} />
        <SectionHead $h={22} $pt={3}><TriRight />相关性</SectionHead>
        <Sash $h={2} />
        <SectionHead $h={26} $pl={12} $pt={1} $gap={7}><TriDown />质量属性</SectionHead>
        <CompLine>
          <span>_model4 : 1 组件</span>
          <GreenCheck />
        </CompLine>
        <ConfigPanel>
          <ConfigHead><TriDown $s={4} />配置关联</ConfigHead>
          <ConfigRow><ConfigIcon><ModelFace /></ConfigIcon>MODEL</ConfigRow>
          <ConfigRow><ConfigIcon><OpenFolder w={24} h={19} /></ConfigIcon>AllComponents</ConfigRow>
          <ConfigRow><ConfigIcon><YellowBlocks /></ConfigIcon>不适用</ConfigRow>
          <ConfigRow><ConfigIcon><SourceNodes /></ConfigIcon>源优先：关</ConfigRow>
        </ConfigPanel>
        <GridArea>
          <GridTable>
            <GridHead>
              <HeadCell />
              <HeadCell>名称</HeadCell>
              <HeadCell>值</HeadCell>
              <HeadCell>单位</HeadCell>
              <HeadCell $line $bold>源</HeadCell>
              <HeadCell>设计来源</HeadCell>
              <HeadCell>赋予</HeadCell>
              <HeadCell $mono>User Defin</HeadCell>
            </GridHead>
            {gridRows.map((r) => (
              <GridRow key={r.n}>
                <NumCell $bold={r.n === 1}>{r.n}</NumCell>
                <NameGridCell>
                  {r.folded ? <GridChevron><ChevronSide color="#999" /></GridChevron> : <GridConn />}
                  {r.name}
                </NameGridCell>
                <TextCell $right>{r.v}</TextCell>
                <TextCell>{r.u}</TextCell>
                <SourceCell>
                  {r.src}
                  {r.src && <Caret $s={4} />}
                  {r.n === 1 && (
                    <>
                      <OpenSelect>
                        <OpenCurrent>设计来源<Caret $s={4} /></OpenCurrent>
                        <OpenOption $h={13} $sel>设计来源</OpenOption>
                        <OpenOption $h={13}>赋予</OpenOption>
                      </OpenSelect>
                      <Marker $l={-9} $t={17} $w={113} />
                      <Marker $l={-17} $t={31} $w={120} />
                    </>
                  )}
                </SourceCell>
                <TextCell $right>{r.r}</TextCell>
                <TextCell>{r.a}</TextCell>
                <TextCell />
              </GridRow>
            ))}
          </GridTable>
          <VScroll>
            <VArrow><ChevronUp /></VArrow>
            <VThumb />
          </VScroll>
          <SideButtons>
            <SideButton><RefreshIcon size={24} sw={1.2} /></SideButton>
            <SideButton><InfoLine /></SideButton>
            <SideButton><TableIcon head="#2a7a3c" w={21} h={20} /></SideButton>
            <SideButton><ChecklistIcon /></SideButton>
            <SideButton><StubIcon /></SideButton>
          </SideButtons>
        </GridArea>
      </LeftPanel>

      <RightPane>
        <TabBar>
          <DocTab $w={95} $pl={6} $gap={3}><HomeIcon />欢迎页面</DocTab>
          <DocTab $w={133} $pl={8} $gap={6} $fs={13} $active>
            <CamIcon />_model1.prt
            <DocArrow />
            <CloseX />
          </DocTab>
        </TabBar>
        <Canvas>
          <CadTable>
            <CadCell />
            <CadCell><CadNum>1</CadNum></CadCell>
            <CadCell />
            <CadCell><CadNum>7.831</CadNum></CadCell>
            <CadCell><CadNum>7.831</CadNum></CadCell>
            <CadCell />
            <CadCell />
            <CadCell><CadNum>1</CadNum></CadCell>
            <CadCell /><CadCell /><CadCell /><CadCell />
            <CadCell />
            <CadCell><CadNum>1</CadNum></CadCell>
            <CadCell /><CadCell /><CadCell /><CadCell />
            <CadCell $col="1" $row="4 / 6" $pad="0 58px 0 0"><CadBig>称</CadBig></CadCell>
            <CadCell $col="2" $row="4 / 6" $stack $gap={6}><CadBig>数</CadBig><CadBig>量</CadBig></CadCell>
            <CadCell $col="3" $row="4 / 6" $gap={42} $pad="0 0 0 6px"><CadBig>材</CadBig><CadBig>料</CadBig></CadCell>
            <CadCell $col="4" $row="4"><CadBig $fs={22}>单件</CadBig></CadCell>
            <CadCell $col="5" $row="4"><CadBig $fs={22}>总计</CadBig></CadCell>
            <CadCell $col="6" $row="4 / 6" $gap={12}><CadBig>备</CadBig><CadBig>注</CadBig></CadCell>
            <CadCell $col="4 / 6" $row="5" $gap={4} $pad="0 0 0 8px"><CadBig>重</CadBig><CadBig>量</CadBig></CadCell>
          </CadTable>
        </Canvas>
      </RightPane>
    </Main>
    <BottomStrip />

    <ArrowLayer width="1468" height="812" viewBox="0 0 1468 812">
      {arrows.map((a, i) => (
        <polygon key={i} points={arrowPoints(a.from, a.to, a.neck, a.head, a.len)} fill="#f13c3c" />
      ))}
    </ArrowLayer>
    <Watermark>
      <HexLogo />
      <WmText>
        <WmTitle>
          <WmLatin>3D</WmLatin>
          <WmCjk>世界网</WmCjk>
        </WmTitle>
        <WmUrl>WWW.3DSJW.COM</WmUrl>
      </WmText>
    </Watermark>
  </Page>
);

export default App;
